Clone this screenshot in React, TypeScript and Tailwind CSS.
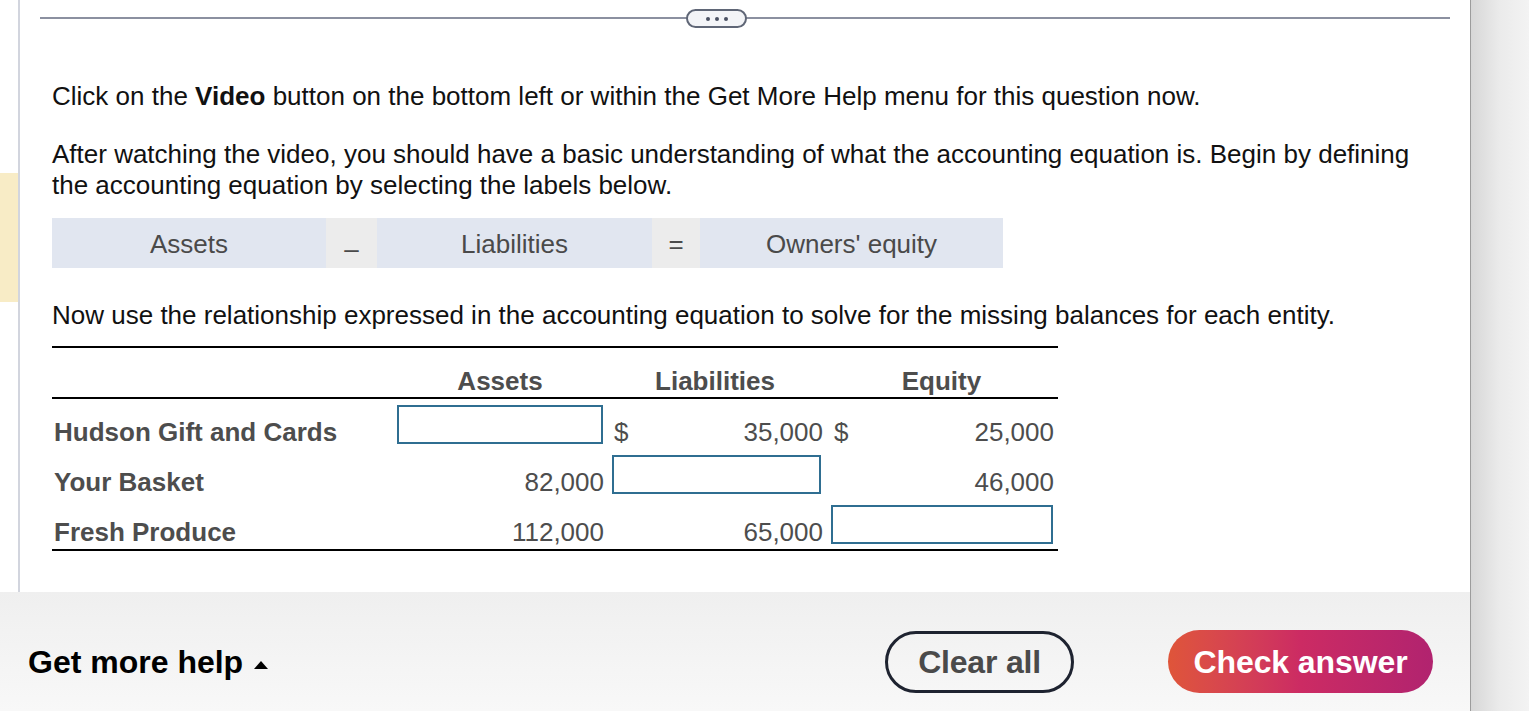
import React from "react";

function NumCell({ children, dollar, pr }: { children?: React.ReactNode; dollar?: boolean; pr: string }) {
  return (
    <div className="flex h-[50px] items-start pt-[18px] leading-[30px]">
      {dollar ? <span className="pl-[9px]">$</span> : null}
      <span className={`ml-auto ${pr}`}>{children}</span>
    </div>
  );
}

function BoxCell({ pl, pr }: { pl: string; pr: string }) {
  return (
    <div className={`flex h-[50px] items-start pt-[6px] ${pl} ${pr}`}>
      <div className="h-[39px] w-full border-2 border-[#2f6e91] bg-white" />
    </div>
  );
}

export default function App() {
  return (
    <div className="flex h-[711px] w-[1529px] overflow-hidden bg-white font-['Liberation_Sans',Arial,sans-serif]">
      <div className="flex w-[1470px] shrink-0 flex-col">
        <div className="flex h-[592px] shrink-0">
          <div className="w-[18px] shrink-0 pt-[173px]">
            <div className="h-[129px] w-full bg-[#f8ecc6]" />
          </div>
          <div className="flex-1 border-l-2 border-[#d2d5de]">
            {/* top rule with pill */}
            <div className="relative ml-[20px] mt-[17px] h-[2px] w-[1410px] bg-[#8b90a0]">
              <div className="absolute left-[646px] top-[-8px] flex h-[19px] w-[61px] items-center justify-center gap-[5px] rounded-full border-2 border-[#5f6676] bg-[#f3f4f7]">
                <span className="h-[4px] w-[4px] rounded-full bg-[#4a5062]" />
                <span className="h-[4px] w-[4px] rounded-full bg-[#4a5062]" />
                <span className="h-[4px] w-[4px] rounded-full bg-[#4a5062]" />
              </div>
            </div>

            <p className="mt-[62px] pl-[32px] text-[26px] leading-[31px] text-[#111]">
              Click on the <span className="font-bold">Video</span> button on the bottom left or within the Get More Help menu for this question now.
            </p>
            <p className="mt-[27px] pl-[32px] text-[26px] leading-[31px] text-[#111]">
              After watching the video, you should have a basic understanding of what the accounting equation is. Begin by defining
              <br />
              the accounting equation by selecting the labels below.
            </p>

            {/* equation row */}
            <div className="ml-[32px] mt-[17px] flex h-[50px] w-[951px] text-[26px] text-[#4a4a4a]">
              <div className="flex w-[274px] items-center justify-center bg-[#e1e6f0] pt-[3px]">Assets</div>
              <div className="flex w-[51px] items-center justify-center bg-[#ececec] pt-[3px]">
                <span className="translate-y-[5px]">–</span>
              </div>
              <div className="flex w-[275px] items-center justify-center bg-[#e1e6f0] pt-[3px]">Liabilities</div>
              <div className="flex w-[48px] items-center justify-center bg-[#ececec] pt-[3px]">=</div>
              <div className="flex w-[303px] items-center justify-center bg-[#e1e6f0] pt-[3px]">Owners' equity</div>
            </div>

            <p className="mt-[32px] pl-[32px] text-[26px] leading-[31px] text-[#111]">
              Now use the relationship expressed in the accounting equation to solve for the missing balances for each entity.
            </p>

            {/* table */}
            <div className="ml-[32px] mt-[15px] w-[1006px] border-y-2 border-black text-[26px] text-[#4d4d4d]">
              <div className="grid h-[51px] grid-cols-[343px_210px_220px_233px] items-end border-b-2 border-black pb-[1px] font-bold leading-[30px]">
                <div />
                <div className="text-center">Assets</div>
                <div className="text-center">Liabilities</div>
                <div className="text-center">Equity</div>
              </div>
              <div className="grid grid-cols-[343px_210px_220px_233px]">
                <div className="h-[50px] pl-[2px] pt-[18px] font-bold leading-[30px]">Hudson Gift and Cards</div>
                <BoxCell pl="pl-[2px]" pr="pr-[2px]" />
                <NumCell dollar pr="pr-[2px]">35,000</NumCell>
                <NumCell dollar pr="pr-[4px]">25,000</NumCell>

                <div className="h-[50px] pl-[2px] pt-[18px] font-bold leading-[30px]">Your Basket</div>
                <NumCell pr="pr-[1px]">82,000</NumCell>
                <BoxCell pl="pl-[7px]" pr="pr-[4px]" />
                <NumCell pr="pr-[4px]">46,000</NumCell>

                <div className="h-[50px] pl-[2px] pt-[18px] font-bold leading-[30px]">Fresh Produce</div>
                <NumCell pr="pr-[1px]">112,000</NumCell>
                <NumCell pr="pr-[2px]">65,000</NumCell>
                <BoxCell pl="pl-[6px]" pr="pr-[5px]" />
              </div>
            </div>
          </div>
        </div>

        {/* footer */}
        <div className="flex flex-1 items-center bg-linear-to-b from-[#efefef] to-[#f8f8f8] pl-[28px] pr-[37px] pt-[20px]">
          <div className="flex items-center text-[32px] font-bold text-black">
            <span>Get more help</span>
            <svg className="ml-[11px] mt-[6px]" width="14" height="8" viewBox="0 0 14 8">
              <polygon points="7,0 14,8 0,8" fill="#000" />
            </svg>
          </div>
          <div className="ml-auto flex items-center gap-[94px]">
            <button className="flex h-[62px] w-[189px] items-center justify-center rounded-full border-[3px] border-[#1e2330] text-[32px] font-bold tracking-[-0.2px] text-[#4a4a4a]">
              Clear all
            </button>
            <button className="flex h-[63px] w-[265px] items-center justify-center rounded-full bg-linear-to-r from-[#df5539] via-[#cc2b63] to-[#b1236f] text-[32px] font-bold tracking-[-0.1px] text-white">
              Check answer
            </button>
          </div>
        </div>
      </div>
      <div className="flex-1 border-l border-[#9c9c9c] bg-linear-to-r from-[#d7d7d7] via-[#ebebeb] to-[#f3f3f3]" />
    </div>
  );
}
